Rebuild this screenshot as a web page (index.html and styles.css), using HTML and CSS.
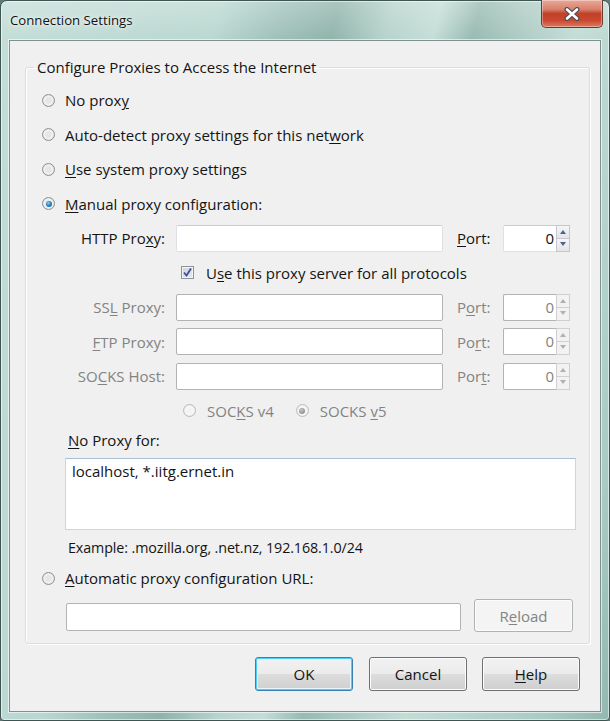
FILE: index.html
```html
<!DOCTYPE html>
<html>
<head>
<meta charset="utf-8">
<title>Connection Settings</title>
<link rel="stylesheet" href="styles.css">
</head>
<body>
<div class="window">
  <div class="titlebar">
    <span class="title">Connection Settings</span>
    <div class="close">
      <svg width="20" height="14" viewBox="0 0 20 14">
        <path d="M5 2.5 L15 11.5 M15 2.5 L5 11.5" stroke="#4a4f5a" stroke-width="5" stroke-linecap="round" fill="none"/>
        <path d="M5 2.5 L15 11.5 M15 2.5 L5 11.5" stroke="#ffffff" stroke-width="2.6" stroke-linecap="round" fill="none"/>
      </svg>
    </div>
  </div>
  <div class="client">
    <fieldset class="group">
      <legend>Configure Proxies to Access the Internet</legend>
      <div class="opt"><span class="radio"></span><span>No prox<u>y</u></span></div>
      <div class="opt"><span class="radio"></span><span>Auto-detect proxy settings for this net<u>w</u>ork</span></div>
      <div class="opt"><span class="radio"></span><span><u>U</u>se system proxy settings</span></div>
      <div class="opt"><span class="radio checked"></span><span><u>M</u>anual proxy configuration:</span></div>

      <div class="proxygrid">
        <span class="lbl">HTTP Pro<u>x</u>y:</span>
        <div class="field"></div>
        <span class="plbl"><u>P</u>ort:</span>
        <div class="spin"><div class="spinval">0</div><div class="spinbtns"><span class="sb up"></span><span class="sb down"></span></div></div>

        <div class="chkrow"><span class="check"><svg width="11" height="11" viewBox="0 0 11 11"><path d="M2 5.5 L4.5 8.5 L9 1.5" stroke="#3b4f9c" stroke-width="1.8" fill="none"/></svg></span><span>U<u>s</u>e this proxy server for all protocols</span></div>

        <span class="lbl dis">SS<u>L</u> Proxy:</span>
        <div class="field dis"></div>
        <span class="plbl dis">P<u>o</u>rt:</span>
        <div class="spin dis"><div class="spinval">0</div><div class="spinbtns"><span class="sb up"></span><span class="sb down"></span></div></div>

        <span class="lbl dis"><u>F</u>TP Proxy:</span>
        <div class="field dis"></div>
        <span class="plbl dis">Po<u>r</u>t:</span>
        <div class="spin dis"><div class="spinval">0</div><div class="spinbtns"><span class="sb up"></span><span class="sb down"></span></div></div>

        <span class="lbl dis">SO<u>C</u>KS Host:</span>
        <div class="field dis"></div>
        <span class="plbl dis">Por<u>t</u>:</span>
        <div class="spin dis"><div class="spinval">0</div><div class="spinbtns"><span class="sb up"></span><span class="sb down"></span></div></div>
      </div>

      <div class="socksrow">
        <span class="radio dis"></span><span class="dtext v4">SOC<u>K</u>S v4</span>
        <span class="radio dis checked"></span><span class="dtext">SOCKS <u>v</u>5</span>
      </div>

      <div class="noproxlbl"><u>N</u>o Proxy for:</div>
      <div class="textarea">localhost, *.iitg.ernet.in</div>
      <div class="example">Example: .mozilla.org, .net.nz, 192.168.1.0/24</div>

      <div class="opt auto"><span class="radio"></span><span><u>A</u>utomatic proxy configuration URL:</span></div>
      <div class="urlrow">
        <div class="field dis url"></div>
        <div class="btn disabled">R<u>e</u>load</div>
      </div>
    </fieldset>
    <div class="buttons">
      <div class="btn default">OK</div>
      <div class="btn">Cancel</div>
      <div class="btn"><u>H</u>elp</div>
    </div>
  </div>
</div>
</body>
</html>
```

FILE: styles.css
```css
html, body {
  margin: 0;
  padding: 0;
}
body {
  width: 610px;
  height: 721px;
  overflow: hidden;
  background: #5f7d78;
  font-family: "Open Sans", "Noto Sans", sans-serif;
  font-size: 15px;
  color: #141414;
}
.window {
  position: relative;
  box-sizing: border-box;
  width: 610px;
  height: 721px;
  border: 1px solid #3e5552;
  border-radius: 7px 7px 4px 4px;
  background:
    linear-gradient(180deg, rgba(255,255,255,0.25) 0px, rgba(255,255,255,0) 40px),
    linear-gradient(104deg, #c3ddd7 0%, #b9d7d0 28%, #9fc1b9 36%, #8fb3aa 43%, #b6d3cc 50%, #c4ddd7 56%, #97bab1 61%, #a9c8c0 66%, #c3dcd6 74%, #a9cbc3 92%, #93b8af 100%);
  box-shadow: inset 0 0 0 1px rgba(255,255,255,0.55);
}
.titlebar {
  height: 39px;
  display: flex;
  align-items: center;
  padding-left: 9px;
}
.title {
  font-size: 13.2px;
  color: #111;
  margin-top: -2px;
  text-shadow: 0 0 8px rgba(255,255,255,0.9), 0 0 3px rgba(255,255,255,0.9);
}
.close {
  position: absolute;
  left: 540px;
  top: -1px;
  width: 62px;
  height: 28px;
  box-sizing: border-box;
  border: 1px solid #6b3a33;
  border-top: none;
  border-radius: 0 0 5px 5px;
  background: linear-gradient(180deg, #e9a898 0%, #d8806c 35%, #c2412a 50%, #c9482f 75%, #dc7a5e 100%);
  box-shadow: inset 0 0 0 1px rgba(255,255,255,0.35);
  display: flex;
  align-items: center;
  justify-content: center;
}
.client {
  margin-left: 8px;
  width: 590px;
  height: 670px;
  border: 1px solid #7e918e;
  background: #f0f0f0;
  box-shadow: 0 0 0 1px rgba(255,255,255,0.6);
}
.group {
  margin: 16px 0 0 15px;
  width: 565px;
  box-sizing: border-box;
  border: 1px solid #d5dfe5;
  border-radius: 3px;
  padding: 6px 0 11px 0;
  box-shadow: inset 1px 1px 0 #fff, 1px 1px 0 #fff;
}
.group legend {
  margin-left: 8px;
  padding: 0 3px;
  line-height: 20px;
  color: #141414;
}
.opt {
  height: 34.5px;
  display: flex;
  align-items: center;
  padding-left: 16px;
  gap: 10px;
}
.radio {
  width: 13px;
  height: 13px;
  box-sizing: border-box;
  border-radius: 50%;
  border: 1px solid #8f9296;
  background: radial-gradient(circle at 50% 50%, #e6e6e6 0 3px, #f4f4f4 4px, #d8d8d8 6px);
  flex: none;
  position: relative;
}
.radio.checked::after {
  content: "";
  position: absolute;
  left: 2.5px;
  top: 2.5px;
  width: 6px;
  height: 6px;
  border-radius: 50%;
  background: radial-gradient(circle at 40% 35%, #8fd0f5 0, #2c86c7 45%, #0d4f8a 100%);
}
.radio.dis {
  border-color: #bcbcbc;
  background: radial-gradient(circle, #f4f4f4 0 3px, #f7f7f7 4px, #e6e6e6 6px);
}
.radio.dis.checked::after {
  background: radial-gradient(circle at 40% 35%, #c8c8c8 0, #9a9a9a 55%, #8a8a8a 100%);
}
.proxygrid {
  display: grid;
  grid-template-columns: 139px 278px 60px 67px;
  grid-auto-rows: 34.5px;
  align-items: center;
}
.lbl {
  width: 139px;
  text-align: right;
  justify-self: start;
}
.proxygrid .field { margin-left: 11px; }
.plbl {
  padding-left: 14px;
}
.dis, .dtext {
  color: #838383;
}
.field {
  height: 27px;
  box-sizing: border-box;
  width: 267px;
  background: #fff;
  border: 1px solid #dde0e5;
  border-top-color: #c9ccd2;
  border-radius: 2px;
}
.field.dis {
  border: 1px solid #b3b3b3;
}
.spin {
  display: flex;
  height: 27px;
  width: 67px;
}
.spinval {
  flex: 1;
  box-sizing: border-box;
  background: #fff;
  border: 1px solid #dde0e5;
  border-top-color: #c9ccd2;
  border-right: none;
  border-radius: 2px 0 0 2px;
  text-align: right;
  padding-right: 2px;
  line-height: 25px;
  font-size: 15px;
  color: #111;
}
.spin.dis .spinval {
  border-color: #b3b3b3;
  color: #838383;
}
.spinbtns {
  width: 14px;
  display: flex;
  flex-direction: column;
}
.sb {
  flex: 1;
  box-sizing: border-box;
  border: 1px solid #c4c7cc;
  background: linear-gradient(180deg, #f6f6f6, #e2e4e8);
  position: relative;
}
.sb.down { border-top: none; }
.sb::after {
  content: "";
  position: absolute;
  left: 3px;
  width: 0;
  height: 0;
  border-left: 3.5px solid transparent;
  border-right: 3.5px solid transparent;
}
.sb.up::after { top: 4px; border-bottom: 4px solid #4d6190; }
.sb.down::after { top: 3px; border-top: 4px solid #4d6190; }
.spin.dis .sb { border-color: #d0d0d0; background: #f2f2f2; }
.spin.dis .sb.up::after { border-bottom-color: #b0b0b0; }
.spin.dis .sb.down::after { border-top-color: #b0b0b0; }
.chkrow {
  grid-column: 2 / span 3;
  display: flex;
  align-items: center;
  gap: 12px;
  padding-left: 16px;
}
.check {
  width: 13px;
  height: 13px;
  box-sizing: border-box;
  border: 1px solid #8f9296;
  background: linear-gradient(135deg, #d0d3d8, #e8e9eb);
  box-shadow: inset 0 0 0 1px #f4f4f4;
  display: flex;
  align-items: center;
  justify-content: center;
}
.socksrow {
  height: 34.5px;
  display: flex;
  align-items: center;
  padding-left: 157px;
}
.socksrow .radio { margin-right: 11px; }
.socksrow .v4 { margin-right: 22px; }
.noproxlbl {
  height: 24px;
  line-height: 24px;
  padding-left: 42px;
}
.textarea {
  margin: 6px 0 0 39px;
  width: 511px;
  height: 72px;
  box-sizing: border-box;
  background: #fff;
  border: 1px solid #c6d8e8;
  border-top-color: #a9bfd4;
  padding: 2px 0 0 6px;
  line-height: 21px;
}
.example {
  margin-top: 6px;
  height: 24px;
  line-height: 24px;
  padding-left: 42px;
  font-size: 14.3px;
  letter-spacing: -0.1px;
}
.opt.auto {
  margin-top: 6px;
  height: 24px;
}
.urlrow {
  margin-top: 9px;
  display: flex;
  align-items: flex-start;
  padding-left: 40px;
  gap: 13px;
}
.field.url {
  width: 395px;
  height: 28px;
  margin-top: 4px;
}
.btn {
  box-sizing: border-box;
  width: 98px;
  height: 34px;
  border: 1px solid #707070;
  border-radius: 3px;
  background: linear-gradient(180deg, #f2f2f2 0%, #ebebeb 49%, #dddddd 50%, #cfcfcf 100%);
  box-shadow: inset 0 0 0 1px #fcfcfc;
  display: flex;
  align-items: center;
  justify-content: center;
  color: #141414;
}
.btn.disabled {
  width: 99px;
  height: 33px;
  border-color: #adb2b5;
  background: #f4f4f4;
  color: #838383;
}
.btn.default {
  border-color: #3c7fb1;
  box-shadow: inset 0 0 0 1px #48d0f8, inset 0 0 0 2px #e7f6fd;
}
.buttons {
  display: flex;
  justify-content: flex-end;
  gap: 15px;
  margin-top: 13px;
  padding-right: 20px;
}
.buttons .btn.default { margin-right: 1px; }
u { text-decoration: underline; text-underline-offset: 2px; }
```
